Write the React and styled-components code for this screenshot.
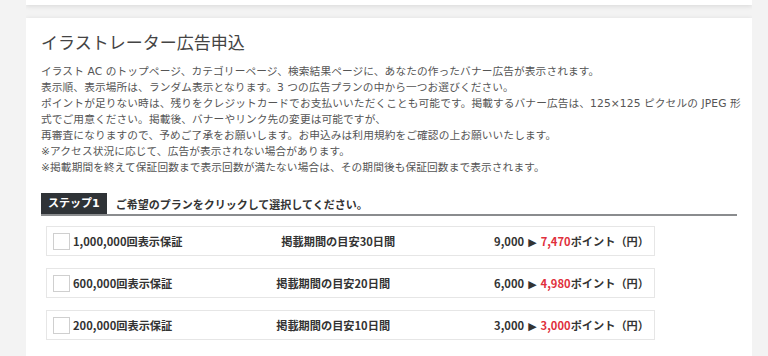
import React from "react";
import styled, { createGlobalStyle } from "styled-components";

const plans = [
  { count: "1,000,000", days: 30, price: "9,000", sale: "7,470" },
  { count: "600,000", days: 20, price: "6,000", sale: "4,980" },
  { count: "200,000", days: 10, price: "3,000", sale: "3,000" },
];

export default function App() {
  return (
    <>
      <GlobalStyle />
      <Page>
        <PrevCard />
        <Card>
          <Title>イラストレーター広告申込</Title>
          <Intro>
            イラスト AC のトップページ、カテゴリーページ、検索結果ページに、あなたの作ったバナー広告が表示されます。
            <br />
            表示順、表示場所は、ランダム表示となります。3 つの広告プランの中から一つお選びください。
            <br />
            ポイントが足りない時は、残りをクレジットカードでお支払いいただくことも可能です。掲載するバナー広告は、125×125 ピクセルの JPEG 形
            <br />
            式でご用意ください。掲載後、バナーやリンク先の変更は可能ですが、
            <br />
            再審査になりますので、予めご了承をお願いします。お申込みは利用規約をご確認の上お願いいたします。
            <br />
            ※アクセス状況に応じて、広告が表示されない場合があります。
            <br />
            ※掲載期間を終えて保証回数まで表示回数が満たない場合は、その期間後も保証回数まで表示されます。
          </Intro>

          <StepHead>
            <StepLabel>ステップ1</StepLabel>
            <StepText>ご希望のプランをクリックして選択してください。</StepText>
          </StepHead>

          <PlanList>
            {plans.map((p) => (
              <Plan key={p.count}>
                <PlanName>
                  <Check />
                  {p.count}回表示保証
                </PlanName>
                <span>掲載期間の目安{p.days}日間</span>
                <span>
                  {p.price}
                  <Arrow>▶</Arrow>
                  <Sale>{p.sale}</Sale>ポイント（円）
                </span>
              </Plan>
            ))}
          </PlanList>
        </Card>
      </Page>
    </>
  );
}

const GlobalStyle = createGlobalStyle`
  body {
    margin: 0;
    background: #f3f3f3;
    font-family: "DejaVu Sans", "Noto Sans CJK JP", sans-serif;
    color: #444;
  }
`;

const Page = styled.div`
  width: 726px;
  margin-left: 26px;
  height: 356px;
  overflow: hidden;
`;

const PrevCard = styled.div`
  height: 5px;
  background: #fff;
  box-shadow: 0 1px 5px rgba(0, 0, 0, 0.12);
  margin-bottom: 13px;
`;

const Card = styled.div`
  background: #fff;
  box-shadow: 0 1px 5px rgba(0, 0, 0, 0.12);
  padding: 12px 15px 20px 15px;
  min-height: 400px;
`;

const Title = styled.h1`
  margin: 0 0 10px 0;
  font-family: "Noto Sans CJK JP", sans-serif;
  font-weight: 400;
  font-size: 17px;
  line-height: 24px;
  color: #444;
`;

const Intro = styled.p`
  margin: 0;
  font-size: 10.7px;
  line-height: 16px;
  color: #555;
  letter-spacing: 0.1px;
  white-space: nowrap;
`;

const StepHead = styled.div`
  margin-top: 17px;
  display: flex;
  align-items: center;
  border-bottom: 2px solid #8a8c8e;
`;

const StepLabel = styled.span`
  background: #2f3337;
  color: #fff;
  font-weight: 700;
  font-size: 11px;
  line-height: 21px;
  padding: 0 7px;
`;

const StepText = styled.span`
  margin-left: 9px;
  font-weight: 700;
  font-size: 11px;
  color: #333;
`;

const PlanList = styled.div`
  margin-top: 10px;
  padding-left: 5px;
  display: flex;
  flex-direction: column;
  gap: 12px;
`;

const Plan = styled.div`
  width: 609px;
  box-sizing: border-box;
  height: 30px;
  border: 1px solid #e6e6e6;
  display: flex;
  align-items: center;
  justify-content: space-between;
  padding: 0 5px 0 6px;
  font-family: "Noto Sans CJK JP", sans-serif;
  font-weight: 700;
  font-size: 11.2px;
  color: #333;
`;

const PlanName = styled.span`
  display: flex;
  align-items: center;
  gap: 3px;
`;

const Check = styled.span`
  width: 15px;
  height: 15px;
  border: 1px solid #cfcfcf;
  background: #fff;
`;

const Arrow = styled.span`
  font-family: "DejaVu Sans", sans-serif;
  font-size: 11px;
  margin: 0 4px;
  color: #333;
`;

const Sale = styled.span`
  color: #e0303c;
`;
